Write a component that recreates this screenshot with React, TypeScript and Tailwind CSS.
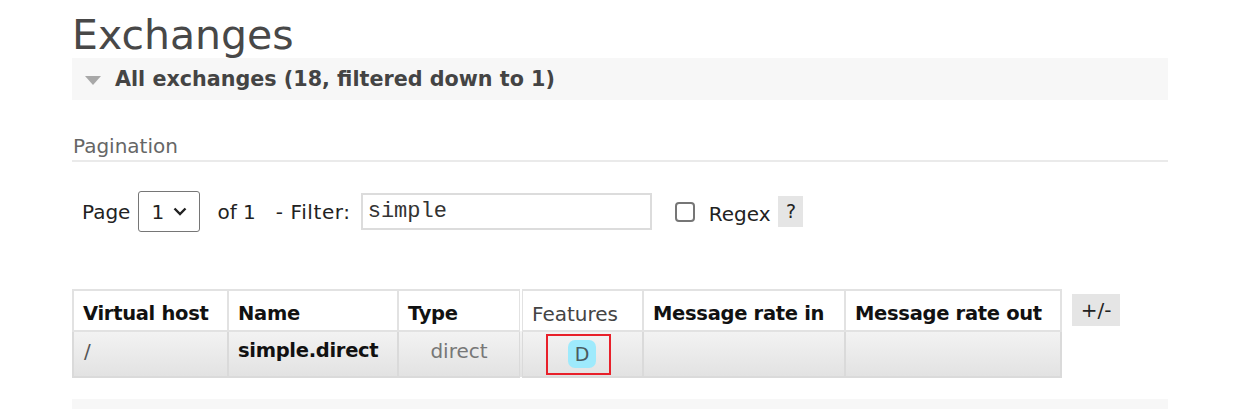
import React from 'react'

const verdana = "font-['DejaVu_Sans',Verdana,sans-serif]"

const HeadCell = ({ children, bold = true, className = '' }: { children: React.ReactNode; bold?: boolean; className?: string }) => (
    <th className={`border-2 border-[#e2e2e2] bg-white px-[9px] pt-[7px] h-[41px] whitespace-nowrap text-left ${bold ? 'text-[19.5px] tracking-[-0.3px] font-bold text-[#111]' : 'text-[20px] font-normal text-[#444]'} ${className}`}>
        {children}
    </th>
)

const App = () => {
    return (
        <div className={`w-[1246px] h-[409px] overflow-hidden bg-white pl-[72px] ${verdana}`}>
            <div className="w-[1096px]">
                <h1 className="pt-[12px] text-[41px] leading-[46px] text-[#484848]">Exchanges</h1>

                <div className="h-[42px] bg-[#f7f7f7] flex items-center pl-[13px] gap-[14px]">
                    <span className="mt-[2px] w-0 h-0 border-l-[8px] border-r-[8px] border-t-[9px] border-l-transparent border-r-transparent border-t-[#a8a8a8]" />
                    <span className="mt-[2px] text-[20.7px] font-bold text-[#444]">All exchanges (18, filtered down to 1)</span>
                </div>

                <div className="mt-[34px] pb-[2px] border-b-2 border-[#eaeaea] text-[20px] leading-[24px] text-[#666] pl-[1px]">Pagination</div>

                <div className="mt-[29px] flex items-center text-[20px] text-[#222]">
                    <span className="ml-[10px]">Page</span>
                    <div className="ml-[8px] w-[62px] h-[41px] border border-[#767676] rounded-[3px] flex items-center justify-between px-[12px]">
                        <span>1</span>
                        <svg width="14" height="9" viewBox="0 0 14 9" fill="none" stroke="#222" strokeWidth="2.4">
                            <path d="M1.5 1.5 L7 7 L12.5 1.5" />
                        </svg>
                    </div>
                    <span className="ml-[17px]">of 1</span>
                    <span className="ml-[20px] tracking-[0.6px]">- Filter:</span>
                    <div className="ml-[10px] w-[291px] h-[37px] border-2 border-[#dcdcdc] flex items-center px-[5px]">
                        <span className="font-['Liberation_Mono',monospace] text-[22px] text-[#333]">simple</span>
                    </div>
                    <span className="ml-[23px] w-[20px] h-[20px] border-2 border-[#767676] rounded-[4px]" />
                    <span className="ml-[14px] mt-[4px]">Regex</span>
                    <span className="ml-[8px] w-[25px] h-[31px] bg-[#e5e5e5] flex items-center justify-center text-[19px]">?</span>
                </div>

                <div className="mt-[57px] flex items-start">
                    <table className="border-collapse border-2 border-[#e2e2e2]">
                        <thead>
                            <tr>
                                <HeadCell className="w-[155px]">Virtual host</HeadCell>
                                <HeadCell className="w-[170px]">Name</HeadCell>
                                <HeadCell className="w-[123px]">Type</HeadCell>
                                <HeadCell bold={false} className="w-[122px] border-l-4 border-l-[#e2e2e2] border-double">
                                    Features
                                </HeadCell>
                                <HeadCell className="w-[202px]">Message rate in</HeadCell>
                                <HeadCell className="w-[216px]">Message rate out</HeadCell>
                            </tr>
                        </thead>
                        <tbody>
                            <tr className="h-[46px] bg-gradient-to-b from-[#f3f3f3] to-[#e2e2e2] text-[20px]">
                                <td className="border-2 border-[#dadada] px-[10px] pb-[6px] text-[#555]">/</td>
                                <td className="border-2 border-[#dadada] px-[9px] pb-[6px] font-bold text-[19.5px] tracking-[-0.3px] text-[#111]">simple.direct</td>
                                <td className="border-2 border-[#dadada] px-[10px] pb-[6px] text-center text-[#777]">direct</td>
                                <td className="border-2 border-[#dadada] border-l-4 border-double pl-[23px]">
                                    <div className="w-[65px] h-[41px] border-2 border-[#e8202a] flex items-center pl-[20px]">
                                        <span className="w-[28px] h-[28px] rounded-[7px] bg-[#9eeafc] flex items-center justify-center text-[19px] text-[#4a5a60]">D</span>
                                    </div>
                                </td>
                                <td className="border-2 border-[#dadada]" />
                                <td className="border-2 border-[#dadada]" />
                            </tr>
                        </tbody>
                    </table>
                    <span className="ml-[10px] mt-[5px] w-[48px] h-[32px] bg-[#e5e5e5] flex items-center justify-center text-[20px] text-[#222]">+/-</span>
                </div>

                <div className="mt-[21px] h-[20px] bg-[#f7f7f7]" />
            </div>
        </div>
    )
}

export default App
